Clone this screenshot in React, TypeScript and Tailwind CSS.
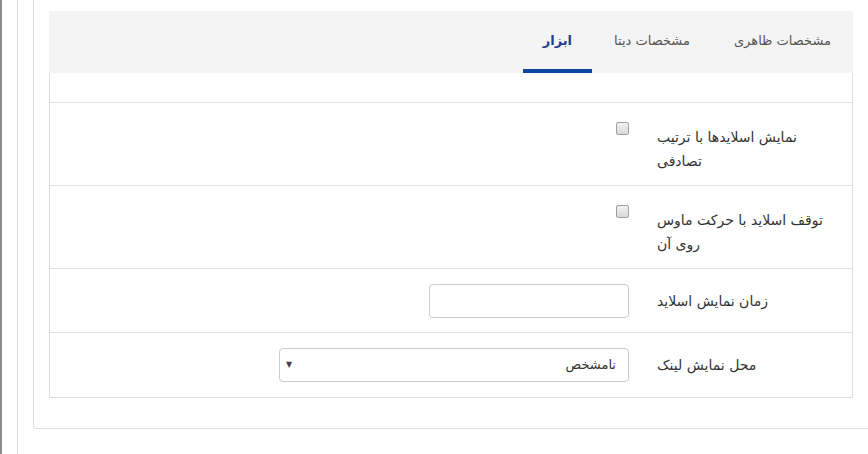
type RowProps = {
  label: string;
  children: React.ReactNode;
};

const labelCls =
  "w-[223px] shrink-0 pr-[20px] pl-[28px] text-left text-[14px] leading-[24px] text-[#333]";

// two-line rows with a checkbox
const CheckRow = ({ label, children }: RowProps) => (
  <div className="flex h-[83px] border-b border-[#e2e2e2]">
    <div className={labelCls + " pt-[22px]"}>{label}</div>
    <div className="flex-1 pt-[19px]">{children}</div>
  </div>
);

const FieldRow = ({ label, children, last }: RowProps & { last?: boolean }) => (
  <div
    className={
      last
        ? "flex items-center h-[64px]"
        : "flex items-center h-[64px] border-b border-[#e2e2e2]"
    }
  >
    <div className={labelCls}>{label}</div>
    <div className="flex-1">{children}</div>
  </div>
);

const Checkbox = () => (
  <input
    type="checkbox"
    className="appearance-none block w-[13px] h-[13px] rounded-[2px] border border-[#a0a0a0] bg-gradient-to-b from-[#f2f2f2] to-[#dadada]"
  />
);

export default function App() {
  const tabs = [
    { name: "مشخصات ظاهری", active: false },
    { name: "مشخصات دیتا", active: false },
    { name: "ابزار", active: true },
  ];

  return (
    <div
      className="h-[454px] overflow-hidden bg-white flex border-l-[2px] border-[#8c8c8c]"
      style={{ fontFamily: '"DejaVu Sans", sans-serif' }}
    >
      <div className="w-[16px] shrink-0 border-r border-[#dddddd]" />
      <div className="pl-[15px] shrink-0">
        <div className="w-[850px] h-[429px] pt-[11px] pl-[15px] border-l border-b border-r border-[#dddddd] rounded-b-[3px]">
          <div className="w-[804px]" dir="rtl">
            {/* tabs */}
            <div className="flex h-[62px] bg-[#f4f4f4]">
              {tabs.map((t) => (
                <div
                  key={t.name}
                  className={
                    t.active
                      ? "relative flex items-center px-[20px] pb-[2px] text-[13px] font-bold text-[#263c8d]"
                      : "relative flex items-center px-[22px] pb-[2px] text-[13px] text-[#555]"
                  }
                >
                  {t.name}
                  {t.active && (
                    <span className="absolute left-0 right-0 bottom-0 h-[4px] bg-[#0d47a1]" />
                  )}
                </div>
              ))}
            </div>

            {/* body */}
            <div className="border-l border-r border-b border-[#dddddd]">
              <div className="h-[30px] border-b border-[#e2e2e2]" />
              <CheckRow label="نمایش اسلایدها با ترتیب تصادفی">
                <Checkbox />
              </CheckRow>
              <CheckRow label="توقف اسلاید با حرکت ماوس روی آن">
                <Checkbox />
              </CheckRow>
              <FieldRow label="زمان نمایش اسلاید">
                <input
                  type="text"
                  className="block w-[200px] h-[34px] rounded-[4px] border border-[#cccccc] bg-white"
                />
              </FieldRow>
              <FieldRow label="محل نمایش لینک" last>
                <div className="flex items-center justify-between w-[350px] h-[34px] rounded-[4px] border border-[#cccccc] bg-white pr-[12px] pl-[6px] text-[13px] text-[#333]">
                  <span>نامشخص</span>
                  <span className="text-[8px] text-[#444] leading-none">▼</span>
                </div>
              </FieldRow>
            </div>
          </div>
        </div>
      </div>
    </div>
  );
}
